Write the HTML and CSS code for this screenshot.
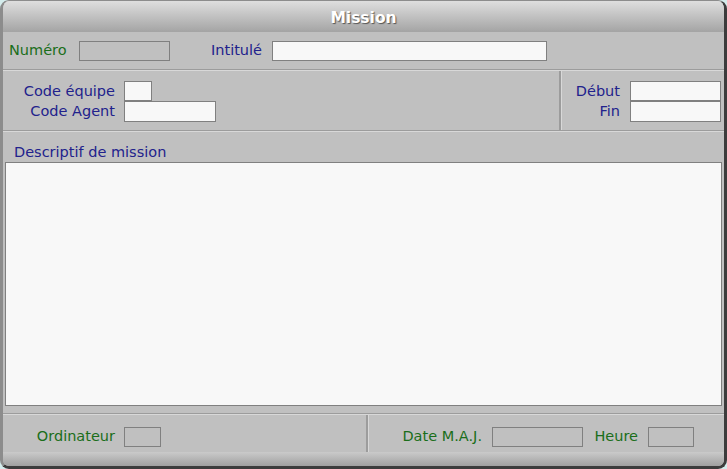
FILE: index.html
```html
<!DOCTYPE html>
<html lang="fr">
<head>
    <meta charset="UTF-8">
    <title>Mission</title>
    <link rel="stylesheet" href="styles.css">
</head>
<body>
    <div class="window">
        <div class="title-bar"><span class="title">Mission</span></div>

        <div class="row row-top">
            <span class="label label-green label-numero">Numéro</span>
            <div class="field field-ro w-numero"></div>
            <span class="label label-blue label-intitule">Intitulé</span>
            <div class="field w-intitule"></div>
        </div>
        <div class="sep"></div>

        <div class="row row-codes">
            <div class="col-left">
                <div class="line">
                    <span class="label label-blue lbl-code">Code équipe</span>
                    <div class="field w-equipe"></div>
                </div>
                <div class="line">
                    <span class="label label-blue lbl-code">Code Agent</span>
                    <div class="field w-agent h21"></div>
                </div>
            </div>
            <div class="vsep"></div>
            <div class="col-right">
                <div class="line">
                    <span class="label label-blue lbl-date">Début</span>
                    <div class="field w-date"></div>
                </div>
                <div class="line">
                    <span class="label label-blue lbl-date">Fin</span>
                    <div class="field w-date h21"></div>
                </div>
            </div>
        </div>
        <div class="sep"></div>

        <div class="desc">
            <span class="label label-blue desc-label">Descriptif de mission</span>
            <div class="field desc-area"></div>
        </div>
        <div class="sep"></div>

        <div class="row row-bottom">
            <div class="bottom-left">
                <span class="label label-green lbl-code">Ordinateur</span>
                <div class="field field-ro w-ordi"></div>
            </div>
            <div class="vsep"></div>
            <div class="bottom-right">
                <span class="label label-green lbl-maj">Date M.A.J.</span>
                <div class="field field-ro w-date"></div>
                <span class="label label-green lbl-heure">Heure</span>
                <div class="field field-ro w-heure"></div>
            </div>
        </div>
        <div class="status-bar"></div>
    </div>
</body>
</html>
```

FILE: styles.css
```css
body {
    margin: 0;
    background: #d4ecec;
    font-family: 'DejaVu Sans', Verdana, sans-serif;
    font-size: 14.5px;
    line-height: 17px;
}

.window {
    width: 727px;
    height: 469px;
    box-sizing: border-box;
    display: flex;
    flex-direction: column;
    background: #c0c0c0;
    border-style: solid;
    border-width: 1px 3px 3px 3px;
    border-color: #8c8c8c #3c3c3c #3c3c3c #8c8c8c;
    border-radius: 9px;
    overflow: hidden;
}

.title-bar {
    height: 31px;
    flex: none;
    display: flex;
    justify-content: center;
    align-items: center;
    background: linear-gradient(#dedede, #a4a4a4);
}

.title {
    color: #fff;
    font-weight: bold;
    font-size: 15.5px;
    text-shadow: 1px 1px 1px #555;
    padding-top: 4px;
}

.row {
    display: flex;
    align-items: center;
}

.label {
    white-space: nowrap;
}

.label-green {
    color: #1a6e1a;
}

.label-blue {
    color: #22228c;
}

.field {
    height: 20px;
    box-sizing: border-box;
    background: #f8f8f8;
    border: 1px solid #808080;
    flex: none;
}

.field-ro {
    background: #c0c0c0;
}

.h21 {
    height: 21px;
}

.sep {
    flex: none;
    height: 0;
    border-top: 1px solid #9c9c9c;
    border-bottom: 1px solid #d8d8d8;
}

.vsep {
    flex: none;
    align-self: stretch;
    width: 2px;
    background: #9c9c9c;
    border-right: 1px solid #d8d8d8;
}

/* first row */
.row-top {
    height: 37px;
    padding-left: 6px;
}

.label-numero {
    width: 70px;
}

.w-numero {
    width: 91px;
}

.label-intitule {
    width: 92px;
    text-align: right;
    margin-right: 10px;
}

.w-intitule {
    width: 275px;
}

/* codes */
.row-codes {
    height: 59px;
    align-items: stretch;
}

.col-left,
.col-right {
    display: flex;
    flex-direction: column;
    padding-top: 10px;
}

.col-left {
    width: 556px;
}

.line {
    display: flex;
    align-items: center;
}

.lbl-code {
    width: 112px;
    text-align: right;
    margin-right: 9px;
}

.w-equipe {
    width: 28px;
}

.w-agent {
    width: 92px;
}

.lbl-date {
    width: 58px;
    text-align: right;
    margin-right: 10px;
}

.w-date {
    width: 91px;
}

/* description */
.desc {
    flex: 1;
    display: flex;
    flex-direction: column;
    padding: 0 2px 7px 2px;
}

.desc-label {
    padding: 12px 0 1px 9px;
}

.desc-area {
    flex: 1;
    height: auto;
}

/* bottom */
.row-bottom {
    height: 37px;
    align-items: stretch;
}

.bottom-left,
.bottom-right {
    display: flex;
    align-items: center;
    padding-top: 6px;
}

.bottom-left {
    width: 363px;
}

.w-ordi {
    width: 37px;
}

.lbl-maj {
    width: 113px;
    text-align: right;
    margin-right: 10px;
}

.lbl-heure {
    width: 55px;
    text-align: right;
    margin-right: 10px;
}

.w-heure {
    width: 46px;
}

.status-bar {
    flex: none;
    height: 14px;
    background: linear-gradient(#cacaca, #a0a0a0);
}
```
